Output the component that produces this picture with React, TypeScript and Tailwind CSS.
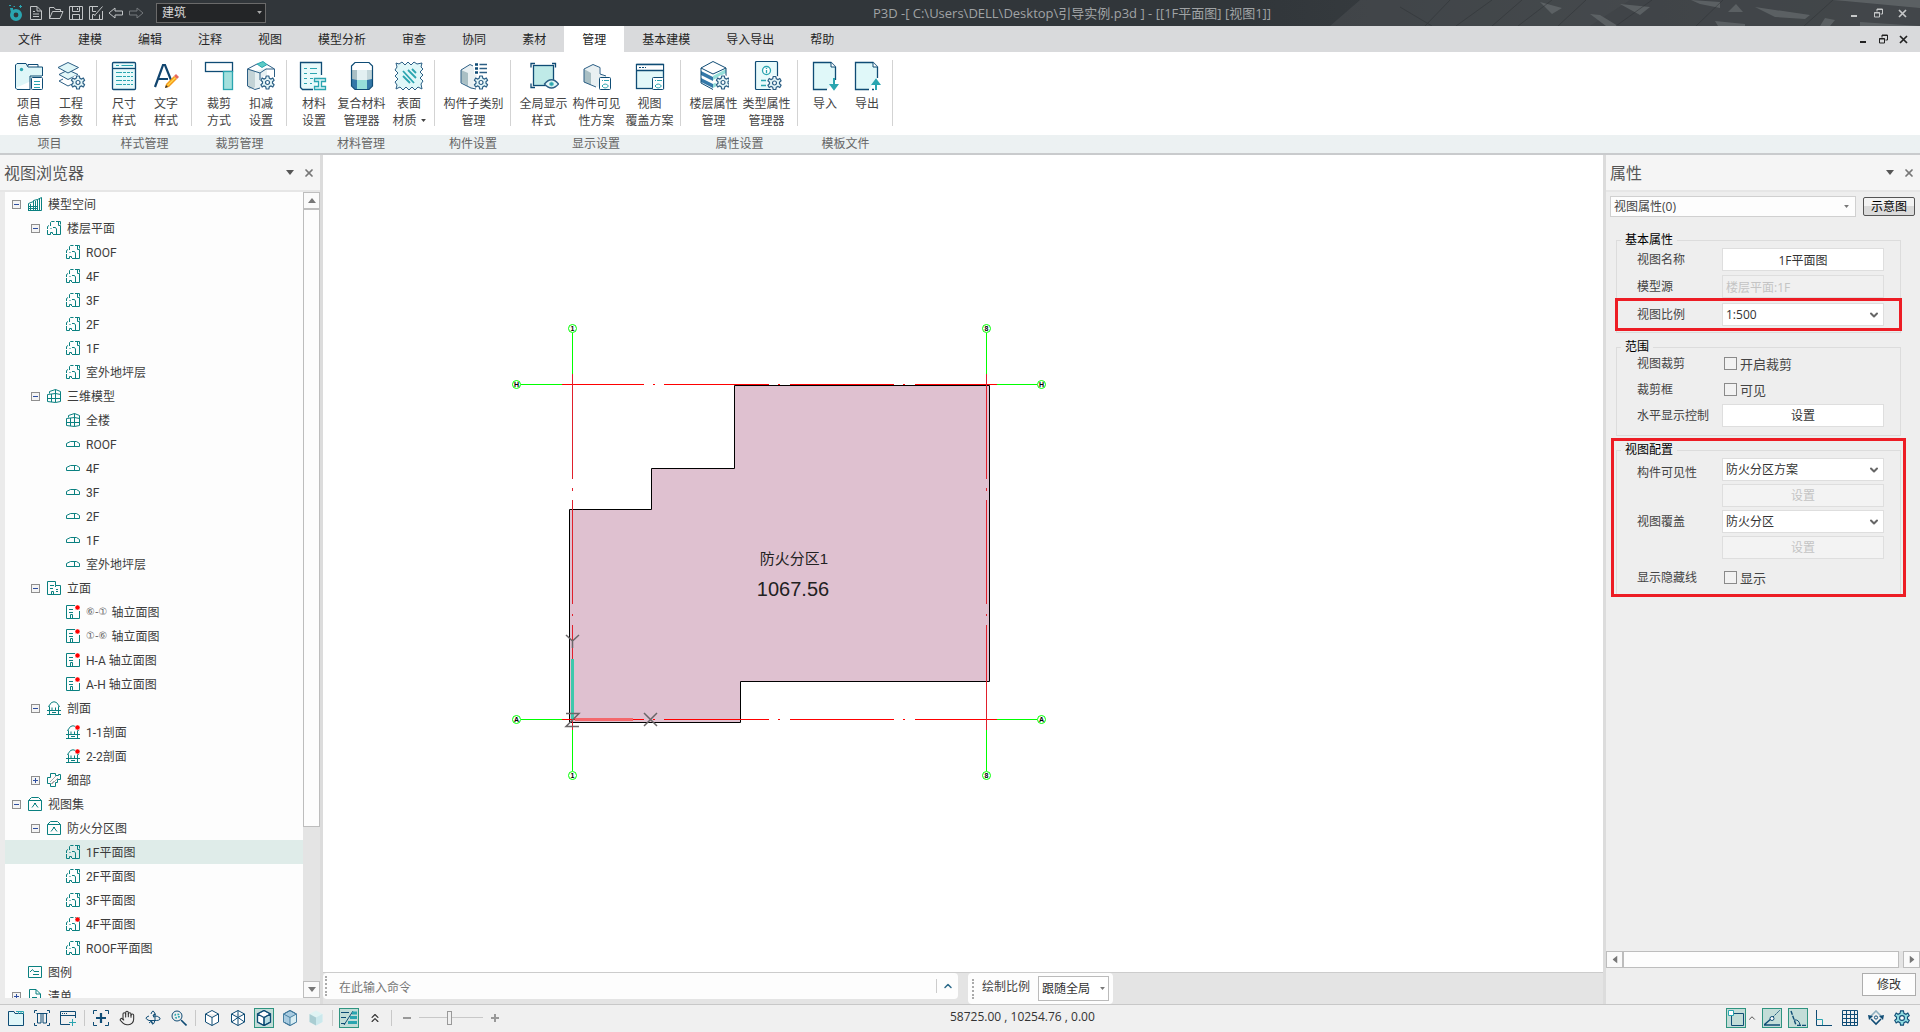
import type { ReactNode } from "react";
import { ChevronDown, ChevronUp, ChevronsUp, Hand, X } from "lucide-react";

const NAVY = "#0f4c75";
const TEAL = "#2aa5b0";
const TREE = "#0a8080";

/* ---------- shared bits ---------- */

const GEAR =
    "M-1.3-6.5H1.3L1.8-4.3L3.6-3.4L5.3-4.5L6.6-2.2L5-.8V.8L6.6 2.2L5.3 4.5L3.6 3.4L1.8 4.3L1.3 6.5H-1.3L-1.8 4.3L-3.6 3.4L-5.3 4.5L-6.6 2.2L-5 .8V-.8L-6.6-2.2L-5.3-4.5L-3.6-3.4L-1.8-4.3Z";

function Gear({ x, y }: { x: number; y: number }) {
    return (
        <g transform={`translate(${x} ${y})`}>
            <circle r="7.5" fill="#fff" />
            <path d={GEAR} fill="#e3f5f7" stroke="#2c5f85" strokeWidth="1.2" strokeLinejoin="round" />
            <circle r="2" fill="#fff" stroke="#2c5f85" strokeWidth="1.2" />
        </g>
    );
}

function Caret({ className = "" }: { className?: string }) {
    return (
        <svg viewBox="0 0 8 5" aria-hidden="true" className={className}>
            <path d="M0 0H8L4 5Z" fill="currentColor" />
        </svg>
    );
}

function WindowButtons({ className }: { className: string }) {
    return (
        <div className={`flex shrink-0 items-center ${className}`}>
            <button type="button" aria-label="最小化" className="flex size-3 items-center justify-center">
                <svg width="8" height="10" viewBox="0 0 8 10">
                    <path d="M1 7H7V9H1Z" fill="currentColor" />
                </svg>
            </button>
            <button type="button" aria-label="还原" className="flex size-3 items-center justify-center">
                <svg width="9" height="10" viewBox="0 0 9 10" fill="none" stroke="currentColor">
                    <path d="M.5 4.5H5.5V9H.5ZM0 5H6M3 3.5V1H8.5V6H6.5M3 1.5H9" />
                </svg>
            </button>
            <button type="button" aria-label="关闭" className="flex size-3 items-center justify-center">
                <svg width="9" height="9" viewBox="0 0 9 9" fill="none" stroke="currentColor" strokeWidth="1.7">
                    <path d="M1 1L8 8M8 1L1 8" />
                </svg>
            </button>
        </div>
    );
}

function PanelHeader({ title }: { title: string }) {
    return (
        <header className="flex h-[37px] shrink-0 items-center border-b-2 border-[#e6e6e6] bg-[#f5f5f5] pl-1 pr-0.5 text-[#555]">
            <h2 className="flex-1 text-base leading-6">{title}</h2>
            <button type="button" aria-label="面板菜单" className="flex h-4 w-5 items-center justify-center">
                <Caret className="h-[5px] w-2" />
            </button>
            <button type="button" aria-label="关闭面板" className="flex h-4 w-[18px] items-center justify-center text-[#777]">
                <X size={12} strokeWidth={3.5} aria-hidden="true" />
            </button>
        </header>
    );
}

/* ---------- title bar ---------- */

const quickActions: { label: string; art: ReactNode; dim?: boolean }[] = [
    { label: "新建", art: <path d="M2.5 1.5H9L13.5 6V14.5H2.5ZM9 1.5V6H13.5M5 6.5H7M5 9H11M5 11.5H11" /> },
    { label: "打开", art: <path d="M1.5 13.5V2.5H6L7.5 4.5H12.5V6.5M1.5 13.5L4.5 6.5H15L12 13.5Z" /> },
    { label: "保存", art: <path d="M1.5 1.5H14.5V14.5H1.5ZM4.5 1.5V6.5H11.5V1.5M4.5 14.5V9.5H11.5V14.5M9.5 3V5" /> },
    { label: "另存为", art: <path d="M10 1.5H1.5V14.5H14.5V6M4.5 1.5V6.5H8M4.5 14.5V9.5H6.5M11.5 14.5V9.5M7.5 9.5L14.5 1.5M7.5 9.5L6.5 11" /> },
    { label: "撤销", art: <path d="M1 8L7 3V6H14.5V10H7V13Z" /> },
    { label: "重做", art: <path d="M15 8L9 3V6H1.5V10H9V13Z" />, dim: true },
];

function TitleBar() {
    return (
        <div className="relative flex h-[26px] shrink-0 items-center overflow-hidden bg-linear-to-r from-[#31363a] from-65% to-[#484d50] text-[#a0a3a5]">
            <svg
                className="absolute right-0 top-0 h-[26px] w-[620px]"
                viewBox="0 0 620 26"
                preserveAspectRatio="none"
                aria-hidden="true"
            >
                <path d="M60 0H620V26H30Z" fill="#4a4f52" opacity=".55" />
                <path d="M330 0H620V26H290Z" fill="#3b4043" opacity=".5" />
                <path
                    d="M391 0L420 2V8L400 4ZM455 7L510 15L505 19L475 17ZM320 4L350 7L340 15ZM415 21L445 24V26H418ZM533 0L620 0V8L545 1ZM428 12L436 4L443 12ZM290 14L300 15L318 26H306ZM525 18L535 20L530 26H520ZM560 22L620 26H560ZM240 2L262 8L252 14Z"
                    fill="#64696c"
                    opacity=".75"
                />
                <path
                    d="M100 7L132 26M150 0L125 26M192 0L156 26M222 0L192 26M252 0L218 26M286 0L258 26M352 0L316 26M423 0L396 26M533 0L504 26"
                    stroke="#2c3033"
                    opacity=".45"
                />
            </svg>
            <div className="relative flex w-[296px] shrink-0 items-center pl-2">
                <svg width="16" height="18" viewBox="0 0 16 18" fill="none" role="img" aria-label="P3D">
                    <circle cx="8" cy="11" r="4.2" stroke={TEAL} strokeWidth="3.6" />
                    <path d="M2 4H5V9H3Z" fill={TEAL} />
                    <path d="M1 1.5H3M12.5 1V4M11 2.5H14M5.5 2.5H7" stroke={TEAL} />
                </svg>
                <div className="ml-1 flex gap-1">
                    {quickActions.map((a) => (
                        <button
                            key={a.label}
                            type="button"
                            aria-label={a.label}
                            className={a.dim ? "text-[#75797c]" : "text-[#c2c5c7]"}
                        >
                            <svg width="16" height="16" viewBox="0 0 16 16" fill="none" stroke="currentColor">
                                {a.art}
                            </svg>
                        </button>
                    ))}
                </div>
                <div className="relative ml-3">
                    <select
                        aria-label="专业"
                        className="block h-5 w-[110px] appearance-none border border-[#6a6a6a] bg-[#232527] pl-[5px] text-xs leading-4 text-[#d5d5d5]"
                    >
                        <option>建筑</option>
                    </select>
                    <Caret className="pointer-events-none absolute right-1 top-2 h-[3px] w-[5px] text-[#aaa]" />
                </div>
            </div>
            <div className="relative flex-1 text-center text-[13px] leading-4">
                P3D -[ C:\Users\DELL\Desktop\引导实例.p3d ] - [[1F平面图] [视图1]]
            </div>
            <WindowButtons className="relative gap-3 pr-3 text-[#c6c8c9]" />
        </div>
    );
}

/* ---------- menu ---------- */

const menus = [
    "文件", "建模", "编辑", "注释", "视图", "模型分析", "审查",
    "协同", "素材", "管理", "基本建模", "导入导出", "帮助",
];

function MenuBar() {
    return (
        <nav className="flex h-[26px] shrink-0 items-stretch bg-[#d9dadc] text-xs text-[#262626]">
            {menus.map((m) => (
                <button key={m} type="button" className={m === "管理" ? "bg-white px-[18px] pt-0.5" : "px-[18px] pt-0.5"}>
                    {m}
                </button>
            ))}
            <WindowButtons className="ml-auto gap-2 pr-[11px] text-[#222]" />
        </nav>
    );
}

/* ---------- ribbon ---------- */

const art: Record<string, ReactNode> = {
    project: (
        <>
            <path d="M1.5 28V5L3 3.5H12L14 7H28.5V16M16.5 29.5H3L1.5 28" fill="#dff6f8" stroke={NAVY} />
            <path d="M14 6V4.5H24V7M16 29V16H28" fill="none" stroke={NAVY} />
            <rect x="17.5" y="17.5" width="11" height="12" rx="1" fill="#fff" stroke={NAVY} />
            <path d="M20 21.5H26M20 24.5H26M20 27.5H26" stroke={TEAL} />
            <circle cx="7.5" cy="9.5" r="1.7" fill={TEAL} />
        </>
    ),
    layers: (
        <>
            <path d="M3 21L12 26L17 23.5M3 21L7 19" fill="none" stroke="#2c5f85" />
            <path d="M3 14.5L12 10L22 14.5L12 19.5Z" fill="#e3f8f9" stroke="#2c5f85" />
            <path d="M2 7.5L12 2.5L22.5 7.5L12 13Z" fill="#dff6f8" stroke="#2c5f85" />
            <Gear x={22} y={22.5} />
        </>
    ),
    dims: (
        <>
            <rect x="3.5" y="2.5" width="23" height="27" rx="1" fill="#e8fafb" stroke={NAVY} strokeWidth="1.3" />
            <path d="M4 8.5H26" stroke={NAVY} strokeWidth="1.3" />
            <path d="M12.5 5.5H24M7 5.5H10M7 12.5H13M7 16.5H13M7 20.5H13M7 24.5H13" stroke={TEAL} />
            <path d="M14 12.5H24M14 16.5H24M14 20.5H24M14 24.5H24" stroke={TEAL} strokeDasharray="3 1" />
        </>
    ),
    text: (
        <>
            <path d="M4 27L12 5H14L20 20M7 19H17" fill="none" stroke="#11456f" strokeWidth="2.2" />
            <path d="M15 24L23 16L26 19L18 27L14 28Z" fill="#f59a1b" />
            <path d="M16.5 25.5L24.5 17.5" stroke="#ffd94a" strokeWidth="1.2" />
            <path d="M23 16L25 14L28 17L26 19Z" fill="#e8685a" />
            <path d="M14 28L15 25L17 27Z" fill="#333" />
        </>
    ),
    crop: (
        <>
            <rect x="1.5" y="2.5" width="27" height="9" fill="#fff" stroke={NAVY} strokeWidth="1.3" />
            <rect x="19.5" y="11.5" width="9" height="18" fill="#a3e0dd" stroke={TEAL} strokeWidth="1.3" />
        </>
    ),
    cutBox: (
        <>
            <path d="M2 9L15 2L28 8V23L16 28L2 28Z" fill="#fff" />
            <path d="M1.5 8.5L9 11V27.5L3 29L1.5 25Z" fill="#c3d3d6" />
            <path d="M9 11L21 8V26L9 29Z" fill="#e6f0f2" />
            <path d="M11 4L17 1.5L21 4.5L16 7.5Z" fill="#5bcac4" stroke={TEAL} />
            <path d="M1.5 9V26L9 29.5L14 28M1.5 9L11 4M1.5 9L14 13V20M14 13L20 9L28.5 9V17M21 4.5L28.5 9" fill="none" stroke="#2c5f85" />
            <Gear x={21.5} y={22.5} />
        </>
    ),
    material: (
        <>
            <path d="M14 29.5H3.5L1.5 27.5V2.5H22.5V15" fill="#e8fafb" stroke={NAVY} strokeWidth="1.3" />
            <path d="M5 8.5H8M11 8.5H18M5 13.5H8M11 13.5H18M5 18.5H8M11 18.5H14M5 23.5H8M11 23.5H13" stroke={TEAL} />
            <path d="M15.5 18.5H26.5V21.5H22.5V26.5H26.5V29.5H15.5V26.5H19.5V21.5H15.5Z" fill="#dff6f8" stroke={TEAL} strokeWidth="1.3" />
        </>
    ),
    composite: (
        <>
            <path d="M4.5 6L8 2.5H22L25.5 6V26L22 29.5H8L4.5 26Z" fill="#fff" />
            <path d="M5 10H10V20H5Z" fill="#a9bfc4" />
            <path d="M10 10H20V20H10Z" fill="#e3f0f2" />
            <path d="M20 10H25V20H20Z" fill="#c3d6da" />
            <path d="M5 19L10 20V29H8L5 26ZM25 19L20 20V29H22L25 26Z" fill="#3478a8" />
            <path d="M10 20H20V29H10Z" fill="#96dfd9" />
            <path d="M4.5 6L8 2.5H22L25.5 6V26L22 29.5H8L4.5 26Z" fill="none" stroke={NAVY} strokeWidth="1.2" />
        </>
    ),
    surface: (
        <>
            <path
                d="M2 3L5 4L8 2L11 5L14 2L17 5L20 2L23 4L28 3L27 7L29 9L26 12L29 15L26 18L29 21L27 24L28 29L24 27L21 30L18 27L15 30L12 27L9 30L6 27L2 29L3 25L1 22L4 19L1 16L4 13L1 10L3 7Z"
                fill="#e0f7f8"
                stroke="#2c5f85"
            />
            <path d="M9 11L20 23M14 10L22 18M9 16L16 23M18 9L22 13" stroke={TEAL} strokeWidth="1.8" />
        </>
    ),
    category: (
        <>
            <path d="M2 10L11 5L15 8V14L21 17V24L12 29L2 23Z" fill="#e9f0f2" />
            <path d="M2 10L9 13V26L2 22Z" fill="#a9bfc4" />
            <path d="M17 29L12 28L2 23V10L11 4.5L14 6" fill="none" stroke="#2c5f85" />
            <path d="M16 4.5H19M16 8.5H19M16 12.5H19" stroke={NAVY} strokeWidth="2.5" />
            <path d="M20.5 4.5H28M20.5 8.5H28M20.5 12.5H28" stroke="#2c5f85" strokeWidth="1.6" />
            <Gear x={22} y={22.5} />
        </>
    ),
    globalView: (
        <>
            <rect x="4.5" y="5.5" width="20" height="20" fill="#bfeae8" stroke={NAVY} strokeWidth="1.3" />
            <path d="M2 7.5V3.5H6M23 3.5H26.5V7.5M2 23.5V27.5H6" fill="none" stroke={NAVY} strokeWidth="1.3" />
            <path d="M15.5 24Q22.5 15.5 29.5 24Q22.5 32 15.5 24Z" fill="#e6f8f9" stroke="#2c5f85" strokeWidth="1.3" />
            <circle cx="22.5" cy="24" r="2" fill={TEAL} stroke="#7cc" />
        </>
    ),
    visibility: (
        <>
            <path d="M2 9L11 4L17 8V14L26 17L16 27L2 23Z" fill="#e9f0f2" />
            <path d="M2 9L9 13V25L2 22Z" fill="#a9bfc4" />
            <path d="M14 27L2 22V9L11 4.5L18 7.5V14L24 16" fill="none" stroke="#2c5f85" />
            <rect x="17.5" y="17.5" width="11" height="12" rx="1" fill="#fff" stroke={NAVY} />
            <path d="M20 20.5H21M22 20.5H27M20 26Q23 22 26.5 26Q23 30 20 26" fill="none" stroke={TEAL} />
        </>
    ),
    override: (
        <>
            <rect x="1.5" y="4.5" width="27" height="24" fill="#e3f8f9" stroke={NAVY} strokeWidth="1.3" />
            <path d="M2 5H28V10H2Z" fill="#fff" />
            <path d="M1.5 4.5H28.5M1.5 10.5H28.5" stroke={NAVY} strokeWidth="1.3" />
            <path d="M4 7.5H11" stroke={NAVY} strokeDasharray="2 1" />
            <rect x="17.5" y="17.5" width="11" height="12" rx="1" fill="#fff" stroke={NAVY} />
            <path d="M20 20.5H21M22 20.5H27M20 26Q23 22 26.5 26Q23 30 20 26" fill="none" stroke={TEAL} />
        </>
    ),
    floors: (
        <>
            <path d="M2 8L14 2L27 8V22L14 29L2 23Z" fill="#fff" />
            <path d="M2 11L14 17V21L2 15ZM2 18L14 24V28L2 22Z" fill="#3478a8" />
            <path d="M14 16L27 9V13L14 20ZM14 24L27 17V21L14 28Z" fill="#96dfd9" />
            <path d="M14 29.5L2 23V8L14 1.5L27 8V16M2 8L14 14L27 8" fill="none" stroke={NAVY} />
            <Gear x={24} y={22.5} />
        </>
    ),
    types: (
        <>
            <rect x="3.5" y="1.5" width="22" height="28" rx="1" fill="#e8fafb" stroke={NAVY} strokeWidth="1.2" />
            <circle cx="14.5" cy="10.5" r="4" fill="#fff" stroke={TEAL} strokeWidth="1.3" />
            <path d="M14.5 8V9M14.5 10V13M9 20.5H14M9 25.5H14" stroke={TEAL} strokeWidth="1.3" />
            <Gear x={22.5} y={23} />
        </>
    ),
    importFile: (
        <>
            <path d="M17 29.5H3.5V2.5H21L25.5 7V20" fill="#e0f8f9" stroke={NAVY} strokeWidth="1.3" />
            <path d="M21 2.5V7H25.5" fill="#fff" stroke={NAVY} />
            <path d="M24 18V28M21 25H27L24 29Z" fill={TEAL} stroke={TEAL} strokeWidth="2" />
        </>
    ),
    exportFile: (
        <>
            <path d="M17 29.5H3.5V2.5H21L25.5 7V18M20 29.5H22" fill="#e0f8f9" stroke={NAVY} strokeWidth="1.3" />
            <path d="M21 2.5V7H25.5" fill="#fff" stroke={NAVY} />
            <path d="M24 22V30M21 24H27L24 20Z" fill={TEAL} stroke={TEAL} strokeWidth="2" />
        </>
    ),
};

interface RibbonItem {
    icon: string;
    lines: string[];
    width: string;
    menu?: boolean;
}

const NARROW = "w-[42px]";
const MEDIUM = "w-[53px]";

const ribbon: { label: string; items: RibbonItem[] }[] = [
    {
        label: "项目",
        items: [
            { icon: "project", lines: ["项目", "信息"], width: NARROW },
            { icon: "layers", lines: ["工程", "参数"], width: NARROW },
        ],
    },
    {
        label: "样式管理",
        items: [
            { icon: "dims", lines: ["尺寸", "样式"], width: NARROW },
            { icon: "text", lines: ["文字", "样式"], width: NARROW },
        ],
    },
    {
        label: "裁剪管理",
        items: [
            { icon: "crop", lines: ["裁剪", "方式"], width: NARROW },
            { icon: "cutBox", lines: ["扣减", "设置"], width: NARROW },
        ],
    },
    {
        label: "材料管理",
        items: [
            { icon: "material", lines: ["材料", "设置"], width: NARROW },
            { icon: "composite", lines: ["复合材料", "管理器"], width: MEDIUM },
            { icon: "surface", lines: ["表面", "材质"], width: NARROW, menu: true },
        ],
    },
    { label: "构件设置", items: [{ icon: "category", lines: ["构件子类别", "管理"], width: "w-[65px]" }] },
    {
        label: "显示设置",
        items: [
            { icon: "globalView", lines: ["全局显示", "样式"], width: MEDIUM },
            { icon: "visibility", lines: ["构件可见", "性方案"], width: MEDIUM },
            { icon: "override", lines: ["视图", "覆盖方案"], width: MEDIUM },
        ],
    },
    {
        label: "属性设置",
        items: [
            { icon: "floors", lines: ["楼层属性", "管理"], width: MEDIUM },
            { icon: "types", lines: ["类型属性", "管理器"], width: MEDIUM },
        ],
    },
    {
        label: "模板文件",
        items: [
            { icon: "importFile", lines: ["导入"], width: NARROW },
            { icon: "exportFile", lines: ["导出"], width: NARROW },
        ],
    },
];

function Ribbon() {
    return (
        <div className="flex h-[103px] shrink-0 border-b-2 border-[#c9cbcd] bg-linear-to-b from-white from-[83px] to-[#ecf1f2] to-[83px] pl-0.5 text-xs text-[#444]">
            {ribbon.map((group) => (
                <section key={group.label} className="flex flex-col">
                    <div className="flex h-[83px] pt-2">
                        <div className="flex h-[66px] border-r border-[#d3d3d3] pl-1.5 pr-1">
                            {group.items.map((item) => (
                                <button
                                    key={item.icon}
                                    type="button"
                                    className={`flex flex-col items-center whitespace-nowrap leading-[17px] ${item.width}`}
                                >
                                    <svg width="30" height="31" viewBox="0 0 30 31" className="mb-1 shrink-0" aria-hidden="true">
                                        {art[item.icon]}
                                    </svg>
                                    {item.lines.map((line, i) => (
                                        <span key={line} className="flex items-center gap-1">
                                            {line}
                                            {item.menu && i === 1 && <Caret className="h-[3px] w-[5px]" />}
                                        </span>
                                    ))}
                                </button>
                            ))}
                        </div>
                    </div>
                    <h3 className="pt-px text-center leading-[18px] text-[#666]">{group.label}</h3>
                </section>
            ))}
        </div>
    );
}

/* ---------- view browser ---------- */

const treeArt: Record<string, ReactNode> = {
    space: <path d="M.5 13.5V6.5L5.5 4.5V13.5ZM5.5 13.5V3.5L9.5 2.5V13.5ZM9.5 2.5L13.5 .5V13.5H0M2.5 7V13M7.5 4V13M11.5 2V13M1 9.5H9M1 11.5H9" />,
    plan: <path d="M3.5 5V1.5L4.5 .5H7.5M9 .5H13.5V3.5M11.5 1V4.5H13.5V13.5H6M2 4.5L.5 5.5V8M.5 9V13.5H3.5V11.5H5.5V13M3.5 7.5H4.5M6 6.5H8.5L9.5 8V13" />,
    model: <path d="M2.5 4.5V2.5L8.5 .5L13.5 2.5V12.5M.5 5.5V12.5L8.5 13.5L13.5 12.5M4.5 5V13M8.5 .5V13.5M.5 5.5L8.5 4.5L13.5 5.5M.5 9.5H13.5" />,
    slab: <path d="M.5 9.5V6.5L4.5 4.5H10.5L13.5 6.5V9.5ZM8.5 4.5V9.5" />,
    elevation: <path d="M.5 13.5V.5H8.5V4.5H13.5V13.5ZM8.5 4.5V6M3 4.5H7M3 7.5H6M4.5 13V10.5H6.5V13M9 8.5H11M9 10.5H11" />,
    facade: <path d="M9 .5H.5V13.5H13.5V6M3 4.5H7M3 7.5H7M4.5 13V9.5H6.5V13" />,
    section: <path d="M0 9.5H14M0 13.5H14M2.5 13V5.5H1.5L4.5 1.5Q7 0 9.5 1.5L12.5 5.5H11.5V13M5 6.5V9M8.5 6.5V9M5 11.5H9" />,
    detail: (
        <>
            <path d="M3 9L9 3M5 11L11 5M3 12L7 8" stroke="#aaa" />
            <path d="M.5 4.5H3.5V.5H8.5V2.5H11.5V1.5H13.5V6.5H10.5V9.5H8.5V13.5H3.5V10.5H.5Z" />
        </>
    ),
    views: <path d="M.5 3.5H13.5V13.5H.5ZM.5 3.5L3.5 .5H10.5L13.5 3.5M4 10.5L7 6.5L10 10.5M6 6.5H8" />,
    legend: <path d="M.5 1.5H13.5V12.5H.5ZM2 7L4.5 4.5L6 6.5H11M5 9.5H11" />,
    list: <path d="M1.5 13.5V.5H8L12.5 5V13.5ZM8 .5V5H12.5M4 8.5H9M4 11.5H9" />,
};

interface TreeRow {
    level: 0 | 1 | 2;
    icon: string;
    label: string;
    axis?: string;
    toggle?: "open" | "closed";
    marked?: boolean;
}

const levels = ["ROOF", "4F", "3F", "2F", "1F", "室外地坪层"];

const tree: TreeRow[] = [
    { level: 0, icon: "space", label: "模型空间", toggle: "open" },
    { level: 1, icon: "plan", label: "楼层平面", toggle: "open" },
    ...levels.map((label): TreeRow => ({ level: 2, icon: "plan", label })),
    { level: 1, icon: "model", label: "三维模型", toggle: "open" },
    { level: 2, icon: "model", label: "全楼" },
    ...levels.map((label): TreeRow => ({ level: 2, icon: "slab", label })),
    { level: 1, icon: "elevation", label: "立面", toggle: "open" },
    { level: 2, icon: "facade", axis: "⑥-①", label: "轴立面图", marked: true },
    { level: 2, icon: "facade", axis: "①-⑥", label: "轴立面图", marked: true },
    { level: 2, icon: "facade", label: "H-A 轴立面图", marked: true },
    { level: 2, icon: "facade", label: "A-H 轴立面图", marked: true },
    { level: 1, icon: "section", label: "剖面", toggle: "open" },
    { level: 2, icon: "section", label: "1-1剖面", marked: true },
    { level: 2, icon: "section", label: "2-2剖面", marked: true },
    { level: 1, icon: "detail", label: "细部", toggle: "closed" },
    { level: 0, icon: "views", label: "视图集", toggle: "open" },
    { level: 1, icon: "views", label: "防火分区图", toggle: "open" },
    { level: 2, icon: "plan", label: "1F平面图" },
    { level: 2, icon: "plan", label: "2F平面图" },
    { level: 2, icon: "plan", label: "3F平面图" },
    { level: 2, icon: "plan", label: "4F平面图", marked: true },
    { level: 2, icon: "plan", label: "ROOF平面图" },
    { level: 0, icon: "legend", label: "图例" },
    { level: 0, icon: "list", label: "清单", toggle: "closed" },
];

const indent = ["pl-[7px]", "pl-[26px]", "pl-[45px]"];

function ViewBrowser() {
    return (
        <aside className="flex w-[323px] shrink-0 flex-col border-r-3 border-[#dcdcdc] bg-[#ebebeb]">
            <PanelHeader title="视图浏览器" />
            <div className="mb-1.5 flex min-h-0 flex-1 pl-[5px]">
                <ul className="min-w-0 flex-1 overflow-hidden bg-[#fdfdfd] font-['Roboto','Noto_Sans_CJK_SC',sans-serif] text-xs leading-4 text-[#3c3c3c]">
                    {tree.map((row, i) => (
                        <li
                            key={i}
                            className={`flex h-6 items-center ${indent[row.level]} ${row.label === "1F平面图" ? "bg-[#dfece9]" : ""}`}
                        >
                            {row.toggle ? (
                                <button
                                    type="button"
                                    aria-label={row.toggle === "open" ? "折叠" : "展开"}
                                    className="mr-[7px] size-[9px] shrink-0 border border-[#8f8f8f] bg-[#f4f4f4]"
                                >
                                    <svg viewBox="0 0 7 7" className="size-[7px]" stroke="#2f4fa0">
                                        <path d={row.toggle === "open" ? "M1 3.5H6" : "M1 3.5H6M3.5 1V6"} />
                                    </svg>
                                </button>
                            ) : (
                                <span className="mr-[7px] w-[9px] shrink-0" />
                            )}
                            <svg width="14" height="14" viewBox="0 0 14 14" fill="none" stroke={TREE} className="mr-1.5 shrink-0" aria-hidden="true">
                                {treeArt[row.icon]}
                                {row.marked && <circle cx="11.5" cy="2.5" r="2.5" fill="#f00" stroke="#fff" strokeWidth=".5" />}
                            </svg>
                            {row.axis && <span className="mr-1 font-['DejaVu_Sans'] text-[10px] text-[#666]">{row.axis}</span>}
                            <span className="whitespace-nowrap pt-0.5">{row.label}</span>
                        </li>
                    ))}
                </ul>
                <div className="flex w-[17px] shrink-0 flex-col bg-[#e4e4e4]">
                    <button type="button" aria-label="向上滚动" className="flex h-[17px] shrink-0 items-center justify-center border border-[#bdbdbd] bg-[#fafafa] text-[#777]">
                        <Caret className="h-[5px] w-2 rotate-180" />
                    </button>
                    <div className="min-h-0 flex-1">
                        <div className="h-4/5 border border-[#bdbdbd] bg-[#fdfdfd]" />
                    </div>
                    <button type="button" aria-label="向下滚动" className="flex h-[17px] shrink-0 items-center justify-center border border-[#bdbdbd] bg-[#fafafa] text-[#777]">
                        <Caret className="h-[5px] w-2" />
                    </button>
                </div>
            </div>
        </aside>
    );
}

/* ---------- drawing area ---------- */

const horizontalDashes = [[239, 321], [330, 332], [341, 446], [455, 457], [467, 571], [580, 582], [592, 674]];
const verticalDashes = [[219, 324], [333, 336], [345, 449], [459, 461], [470, 575]];
const bubbles: [number, number, string][] = [
    [249, 173, "1"], [663, 173, "8"], [249, 620, "1"], [663, 620, "8"],
    [193, 229, "H"], [718, 229, "H"], [193, 564, "A"], [718, 564, "A"],
];

function Drawing() {
    return (
        <svg className="block min-h-0 w-full flex-1 bg-white" role="img" aria-label="1F平面图">
            <path
                d="M246.5 354.5H328.5V313.5H411.5V230.5H666.5V526.5H417.5V567.5H246.5Z"
                fill="#dfc1d0"
                stroke="#000"
            />
            {[229, 564].map((y) => (
                <g key={y}>
                    <path d={`M198 ${y + 0.5}H239M674 ${y + 0.5}H714`} stroke="#0f0" />
                    {horizontalDashes.map(([a, b]) => (
                        <path key={a} d={`M${a} ${y + 0.5}H${b}`} stroke="#f00" />
                    ))}
                </g>
            ))}
            {[249, 663].map((x) => (
                <g key={x}>
                    <path d={`M${x + 0.5} 178V219M${x + 0.5} 575V616`} stroke="#0f0" />
                    {verticalDashes.map(([a, b]) => (
                        <path key={a} d={`M${x + 0.5} ${a}V${b}`} stroke="#e0202c" />
                    ))}
                </g>
            ))}
            {bubbles.map(([x, y, t]) => (
                <g key={`${x}-${y}`}>
                    <circle cx={x + 0.5} cy={y + 0.5} r="4" fill="#fff" stroke="#0f0" />
                    <text x={x + 0.5} y={y + 3} textAnchor="middle" fontSize="7" fontWeight="700" fontFamily="Liberation Sans, sans-serif">
                        {t}
                    </text>
                </g>
            ))}
            <path d="M249.5 504V564" stroke="#3cc9ac" strokeWidth="3" />
            <path d="M252 564.5H310" stroke="#f4686c" strokeWidth="3" />
            <path
                d="M243 480L249.5 486L256 480M249.5 486V493M243 558.5H256L243 571.5H256M321 558L334 571M334 558L321 571"
                fill="none"
                stroke="#6a6668"
                strokeWidth="1.5"
            />
            <text x="471" y="409" textAnchor="middle" fontSize="15" fill="#222" fontFamily="Liberation Sans, Noto Sans CJK SC, sans-serif">
                防火分区1
            </text>
            <text x="470" y="441" textAnchor="middle" fontSize="20" fill="#222" fontFamily="Liberation Sans, sans-serif">
                1067.56
            </text>
        </svg>
    );
}

function Grip() {
    return <span className="h-5 w-0 shrink-0 border-l-2 border-dotted border-[#aaa]" />;
}

function CommandBar() {
    return (
        <div className="flex h-8 shrink-0 items-start gap-2.5 border-t border-[#ccc] bg-[#e4e4e4] text-xs">
            <div className="flex h-[26px] w-1/2 max-w-[635px] items-center rounded bg-[#fdfdfd] pl-0.5">
                <Grip />
                <input
                    aria-label="命令"
                    placeholder="在此输入命令"
                    className="h-5 min-w-0 flex-1 bg-transparent px-3 pt-0.5 leading-4 outline-none placeholder:text-[#777]"
                />
                <button type="button" aria-label="展开命令历史" className="flex h-[14px] w-[22px] items-center justify-center border-l border-[#ccc] text-[#2c6a8a]">
                    <ChevronUp size={12} strokeWidth={3} aria-hidden="true" />
                </button>
            </div>
            <div className="flex h-[31px] items-center rounded bg-[#fdfdfd] px-1">
                <Grip />
                <label htmlFor="draw-scale" className="px-2 pb-1 text-[#444]">
                    绘制比例
                </label>
                <div className="relative">
                    <select id="draw-scale" className="block h-[25px] w-[71px] appearance-none border border-[#bbb] bg-white pl-[3px] text-xs text-[#333]">
                        <option>跟随全局</option>
                    </select>
                    <Caret className="pointer-events-none absolute right-1 top-[11px] h-[3px] w-[5px] text-[#777]" />
                </div>
            </div>
        </div>
    );
}

/* ---------- properties ---------- */

function Field({ id, label, children, labelClass = "" }: { id?: string; label?: string; children: ReactNode; labelClass?: string }) {
    return (
        <div className="flex h-[23px] items-center justify-end pl-5 pr-4">
            {label && (
                <label htmlFor={id} className={`flex-1 leading-4 text-[#444] ${labelClass}`}>
                    {label}
                </label>
            )}
            <div className="w-[162px] shrink-0">{children}</div>
        </div>
    );
}

function Dropdown({ id, value }: { id: string; value: string }) {
    return (
        <div className="relative">
            <select id={id} className="block h-[23px] w-full appearance-none border border-[#dedede] bg-white pl-[3px] text-xs text-[#333]">
                <option>{value}</option>
            </select>
            <ChevronDown size={12} strokeWidth={4} className="pointer-events-none absolute right-1 top-1.5 text-[#666]" aria-hidden="true" />
        </div>
    );
}

function Check({ id, label }: { id: string; label: string }) {
    return (
        <span className="flex items-center gap-[3px] pl-0.5 text-[13px] leading-4 text-[#444]">
            <input id={id} type="checkbox" className="size-[13px] appearance-none border border-[#8a8a8a] bg-[#f2f2f2]" />
            <label htmlFor={id}>{label}</label>
        </span>
    );
}

const wideButton =
    "block h-[23px] w-full border border-[#dedede] bg-white text-center text-xs text-[#333] disabled:bg-[#f3f3f3] disabled:text-[#c4c4c4]";
const box = "border border-[#dcdcdc]";
const legendStyle = "ml-1 h-4 bg-[#eee] px-1 text-xs leading-4 text-black";
const highlight = "pointer-events-none absolute border-3 border-[#ed1c24]";

function Properties() {
    return (
        <aside className="flex w-[317px] shrink-0 flex-col border-l-3 border-[#dcdcdc] bg-[#eee] text-xs">
            <PanelHeader title="属性" />
            <div className="flex items-center gap-[7px] pl-1 pr-[5px] pt-1">
                <div className="relative flex-1">
                    <select aria-label="视图属性" className="block h-[21px] w-full appearance-none border border-[#d0d0d0] bg-[#fdfdfd] pl-[3px] text-xs text-[#444]">
                        <option>视图属性(0)</option>
                    </select>
                    <Caret className="pointer-events-none absolute right-[7px] top-[9px] h-[3px] w-[5px] text-[#777]" />
                </div>
                <button
                    type="button"
                    className="h-[19px] w-[52px] rounded-xs border border-[#555] bg-linear-to-b from-[#f3f3f3] from-45% to-[#dadada] to-45% leading-4 text-black"
                >
                    示意图
                </button>
            </div>

            <form className="mt-[15px] flex flex-col gap-1.5 pl-2.5 pr-[19px]">
                <fieldset className={`${box} pb-1.5`}>
                    <legend className={legendStyle}>基本属性</legend>
                    <div className="flex flex-col gap-1">
                        <Field id="view-name" label="视图名称">
                            <input id="view-name" defaultValue="1F平面图" className={wideButton} />
                        </Field>
                        <Field id="model-source" label="模型源">
                            <input id="model-source" disabled defaultValue="楼层平面:1F" className="block h-[23px] w-full border border-[#dedede] bg-[#f0f0f0] pl-[3px] text-xs text-[#c4c4c4]" />
                        </Field>
                        <div className="relative pt-px">
                            <Field id="view-scale" label="视图比例">
                                <Dropdown id="view-scale" value="1:500" />
                            </Field>
                            <div className={`${highlight} -inset-x-0.5 -bottom-[5px] -top-1`} />
                        </div>
                    </div>
                </fieldset>

                <fieldset className={`${box} pb-2`}>
                    <legend className={legendStyle}>范围</legend>
                    <div className="-mt-[3px] flex flex-col gap-[3px]">
                        <Field id="clip-on" label="视图裁剪">
                            <Check id="clip-on" label="开启裁剪" />
                        </Field>
                        <Field id="clip-frame" label="裁剪框">
                            <Check id="clip-frame" label="可见" />
                        </Field>
                        <Field id="level-display" label="水平显示控制">
                            <button id="level-display" type="button" className={wideButton}>
                                设置
                            </button>
                        </Field>
                    </div>
                </fieldset>

                <div className="relative">
                    <fieldset className={`${box} pb-1.5`}>
                        <legend className={legendStyle}>视图配置</legend>
                        <div className="flex flex-col gap-[3px]">
                            <Field id="visibility-scheme" label="构件可见性" labelClass="self-end">
                                <Dropdown id="visibility-scheme" value="防火分区方案" />
                            </Field>
                            <Field>
                                <button type="button" disabled className={wideButton}>
                                    设置
                                </button>
                            </Field>
                            <Field id="view-override" label="视图覆盖">
                                <Dropdown id="view-override" value="防火分区" />
                            </Field>
                            <Field>
                                <button type="button" disabled className={wideButton}>
                                    设置
                                </button>
                            </Field>
                            <div className="pt-1">
                                <Field id="hidden-lines" label="显示隐藏线">
                                    <Check id="hidden-lines" label="显示" />
                                </Field>
                            </div>
                        </div>
                    </fieldset>
                    <div className={`${highlight} -inset-x-[5px] -bottom-px -top-1`} />
                </div>
            </form>

            <div className="mt-auto flex h-[17px] shrink-0 bg-[#e4e4e4]">
                <button type="button" aria-label="向左滚动" className="flex w-[17px] items-center justify-center border border-[#bdbdbd] bg-[#fafafa] text-[#777]">
                    <Caret className="h-[5px] w-2 rotate-90" />
                </button>
                <div className="mr-1 flex-1 border border-[#bdbdbd] bg-[#fdfdfd]" />
                <button type="button" aria-label="向右滚动" className="flex w-[17px] items-center justify-center border border-[#bdbdbd] bg-[#fafafa] text-[#777]">
                    <Caret className="h-[5px] w-2 -rotate-90" />
                </button>
            </div>
            <div className="flex justify-end pb-2 pr-1 pt-[5px]">
                <button type="button" className="h-[23px] w-[54px] border border-[#adadad] bg-[#fdfdfd] text-[#333]">
                    修改
                </button>
            </div>
        </aside>
    );
}

/* ---------- status bar ---------- */

const CUBE = "M8 .5L14.5 4V12L8 15.5L1.5 12V4Z";
const CUBE_FACES = "M1.5 4L8 7.5L14.5 4M8 7.5V15.5";

const statusGroups: { label: string; art: ReactNode; active?: boolean }[][] = [
    [
        { label: "文件夹", art: <><path d="M.5 1.5H6L7 3.5H15.5V15.5H.5Z" fill="#dff6f8" /><path d="M8 1.5H15.5V4M10.5 2V4M13 2V4" stroke={TEAL} /></> },
        { label: "平铺", art: <path d="M3 .5H.5V3M13 .5H15.5V3M.5 13V15.5H3M15.5 13V15.5H13M3.5 3.5H7V13H3.5ZM9 3.5H12.5V13H9ZM2.5 3.5H13.5" /> },
        { label: "新窗口", art: <><path d="M10 14.5H.5V1.5H15.5V8M.5 5.5H15.5" /><path d="M2 3.5H7" strokeDasharray="1 1" /><path d="M12.5 9V16M9 12.5H16" stroke={TEAL} /></> },
    ],
    [
        { label: "居中", art: <><path d="M4 .5H.5V4M12 .5H15.5V4M.5 12V15.5H4M15.5 12V15.5H12" /><path d="M8 3V13M3 8H13" strokeWidth="2.2" /></> },
        { label: "平移", art: <Hand x="0" y="0" width="16" height="16" strokeWidth={1.6} /> },
        { label: "环绕", art: <><path d="M6 4Q8-2 10 4V10Q8 18 6 11M4 6Q-2 8 4 10.5H8Q16 11 15 8Q13 5.5 8 6" /><path d="M4 13L6.5 11L8 14M11 4L8 5L9 7.5" /></> },
        { label: "缩放", art: <><circle cx="6" cy="6" r="5" /><path d="M10 10L15.5 15.5" strokeWidth="1.6" /><circle cx="6" cy="6" r="2" stroke={TEAL} strokeWidth="1.8" strokeDasharray="1.5 1.5" /></> },
    ],
    [
        { label: "消隐", art: <path d={CUBE + CUBE_FACES} fill="#fff" /> },
        { label: "线框", art: <path d={CUBE + CUBE_FACES + "M8 .5V7.5M1.5 12L8 7.5L14.5 12"} fill="#fff" /> },
        { label: "着色", active: true, art: <><path d={CUBE} fill="#fff" /><path d="M8 7.5L14.5 4V12L8 15.5Z" fill="#b9dde3" /><path d={CUBE + CUBE_FACES} strokeWidth="1.3" /></> },
        { label: "真实", art: <><path d={CUBE} fill="#a8cbe0" /><path d="M8 7.5L14.5 4V12L8 15.5Z" fill="#d9edf2" stroke="none" /><path d={CUBE + CUBE_FACES} stroke="#4a81a3" /></> },
        { label: "渲染", art: <g stroke="none"><path d={CUBE} fill="#e0f3f3" /><path d="M1.5 4L8 7.5V15.5L1.5 12Z" fill="#a9cdd2" /><path d="M8 7.5L14.5 4V12L8 15.5Z" fill="#cbe8ec" /></g> },
    ],
    [
        { label: "线宽", active: true, art: <><path d="M0 2.5H8M0 7.5H5M0 13.5H4M3 15L12 1" /><path d="M11 3H16M9 7.5H16M7 12.5H16" stroke={TEAL} strokeWidth="3.2" /></> },
        { label: "展开", art: <ChevronsUp x="1" y="1" width="14" height="14" strokeWidth={2} /> },
    ],
];

const snapTools: { label: string; art: ReactNode; active?: boolean }[] = [
    { label: "对象捕捉", active: true, art: <><path d="M3.5 3.5H15.5V15.5H3.5Z" /><path d="M.5 .5H5.5V5.5H.5Z" fill="#fff" stroke={TEAL} /></> },
    { label: "最近点", active: true, art: <><path d="M0 15H16M0 15L8 8" strokeWidth="1.4" /><path d="M9 7L16 0" strokeDasharray="2 1" /><circle cx="8" cy="8.5" r="2" fill="#fff" /></> },
    { label: "角度", active: true, art: <><path d="M1 1L6 15M7 15.5H16" strokeDasharray="4 1" strokeWidth="1.4" /><path d="M4 10Q9 9 10 15" /></> },
    { label: "正交", art: <><path d="M.5 0V15.5H16" /><path d="M.5 9.5H6.5V15" stroke={TEAL} /></> },
    { label: "栅格", art: <path d="M.5 .5H15.5V15.5H.5ZM4.5 0V16M8.5 0V16M12.5 0V16M0 4.5H16M0 8.5H16M0 12.5H16" /> },
    { label: "动态", art: <><path d="M3 6L8 1L13 6" stroke="#8fb0bf" strokeWidth="1.6" /><path d="M3 9L8 14L13 9" strokeWidth="1.6" /><path d="M0 5L5 6L1 10ZM16 5L11 6L15 10Z" fill={NAVY} stroke="none" /><circle cx="8" cy="7.5" r="1.6" /></> },
    { label: "设置", art: <g transform="translate(8 8) scale(1.1)"><path d={GEAR} fill="#8fdbe0" /><circle r="2.2" fill="#fff" /></g> },
];

function Tool({ label, art: drawing, active }: { label: string; art: ReactNode; active?: boolean }) {
    return (
        <button
            type="button"
            aria-label={label}
            className={`mx-[3px] flex size-5 shrink-0 items-center justify-center border ${active ? "border-[#2f9480] bg-[#c3ddd8]" : "border-transparent"}`}
        >
            <svg width="16" height="16" viewBox="0 0 16 16" fill="none" stroke={NAVY}>
                {drawing}
            </svg>
        </button>
    );
}

function StatusBar() {
    return (
        <footer className="flex h-7 shrink-0 items-center border-t border-[#c8c8c8] bg-[#f0f0f0] pb-0.5 text-xs text-[#333]">
            <div className="flex w-[950px] shrink items-center overflow-hidden pl-[3px]">
                {statusGroups.map((group, i) => (
                    <div key={i} className="flex items-center">
                        {group.map((t) => (
                            <Tool key={t.label} {...t} />
                        ))}
                        <span className="mx-[3px] h-4 w-px bg-[#c8c8c8]" />
                    </div>
                ))}
                <button type="button" aria-label="缩小" className="ml-1 flex size-4 items-center justify-center">
                    <span className="h-0.5 w-2 bg-[#999]" />
                </button>
                <input
                    type="range"
                    aria-label="缩放比例"
                    defaultValue={48}
                    className="mx-1 h-4 w-[64px] appearance-none bg-linear-to-b from-transparent from-[7px] via-[#a0a0a0] via-[7px] to-transparent to-[8px] [&::-webkit-slider-thumb]:h-[14px] [&::-webkit-slider-thumb]:w-[5px] [&::-webkit-slider-thumb]:appearance-none [&::-webkit-slider-thumb]:border [&::-webkit-slider-thumb]:border-[#999] [&::-webkit-slider-thumb]:bg-[#f0f0f0]"
                />
                <button type="button" aria-label="放大" className="flex size-4 items-center justify-center">
                    <svg width="8" height="8" viewBox="0 0 8 8" stroke="#999" strokeWidth="2">
                        <path d="M4 0V8M0 4H8" />
                    </svg>
                </button>
            </div>
            <output className="whitespace-nowrap pb-0.5 leading-4">58725.00 , 10254.76 , 0.00</output>
            <div className="ml-auto flex items-center pr-[5px]">
                {snapTools.map((t, i) => (
                    <div key={t.label} className="flex items-center">
                        <Tool {...t} />
                        {i === 0 && <ChevronUp size={10} strokeWidth={2} className="-ml-0.5 mr-0.5" aria-hidden="true" />}
                    </div>
                ))}
            </div>
        </footer>
    );
}

export default function App() {
    return (
        <div className="flex h-screen flex-col overflow-hidden bg-[#eee] font-['Open_Sans','Noto_Sans_CJK_SC',sans-serif]">
            <TitleBar />
            <MenuBar />
            <Ribbon />
            <div className="flex min-h-0 flex-1">
                <ViewBrowser />
                <main className="flex min-w-0 flex-1 flex-col">
                    <Drawing />
                    <CommandBar />
                </main>
                <Properties />
            </div>
            <StatusBar />
        </div>
    );
}
